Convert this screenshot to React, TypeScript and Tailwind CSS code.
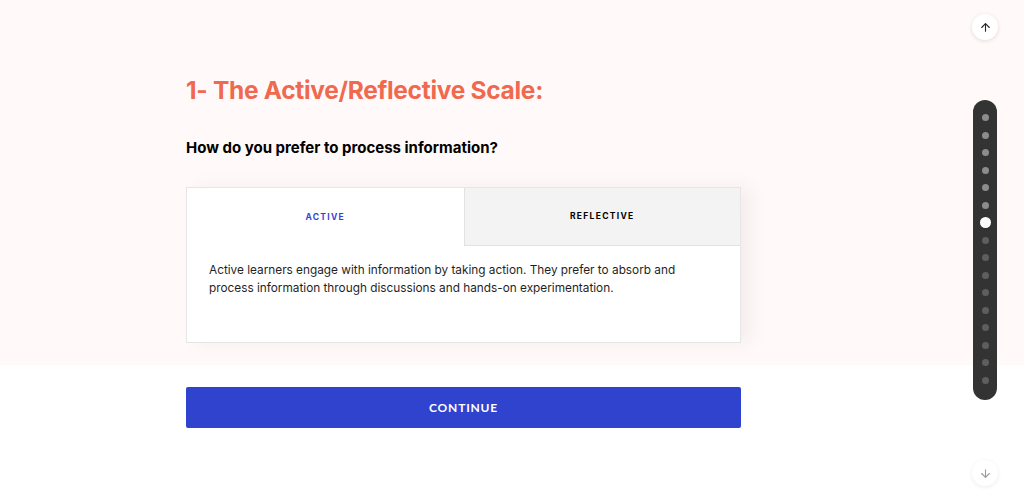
import React, { useState } from 'react';

const tabs = [
  {
    id: 'active',
    label: 'ACTIVE',
    text: 'Active learners engage with information by taking action. They prefer to absorb and process information through discussions and hands-on experimentation.',
  },
  {
    id: 'reflective',
    label: 'REFLECTIVE',
    text: 'Reflective learners prefer to think things through quietly first. They like to process information by reflecting on it and working alone.',
  },
];

const dots = Array.from({ length: 16 }, (_, i) => i);

const ArrowIcon = ({ down = false, className = '' }: { down?: boolean; className?: string }) => (
  <svg viewBox="0 0 24 24" className={className} fill="none" stroke="currentColor" strokeWidth={2} strokeLinecap="round" strokeLinejoin="round">
    {down ? (
      <>
        <path d="M12 5v14" />
        <path d="M19 12l-7 7-7-7" />
      </>
    ) : (
      <>
        <path d="M12 19V5" />
        <path d="M5 12l7-7 7 7" />
      </>
    )}
  </svg>
);

const App: React.FC = () => {
  const [tab, setTab] = useState('active');
  const current = tabs.find((t) => t.id === tab)!;

  return (
    <div className="relative w-full h-[504px] overflow-hidden bg-white" style={{ fontFamily: 'Inter, "Noto Sans", sans-serif' }}>
      <section className="bg-[#fffaf9] pt-[73px] pb-[22px] pl-[186px]">
        <h1 className="text-[24.5px] leading-[34px] font-bold text-[#f0694f] tracking-[-0.3px]">1- The Active/Reflective Scale:</h1>
        <h2 className="mt-[30px] text-[15px] leading-[22px] font-bold text-black">How do you prefer to process information?</h2>

        <div className="mt-[28px] w-[555px] h-[156px] bg-white border border-[#e6e6e6] shadow-[10px_0_18px_rgba(0,0,0,0.05)] flex flex-col">
          <div className="grid grid-cols-2 h-[58px]">
            {tabs.map((t) => (
              <button
                key={t.id}
                onClick={() => setTab(t.id)}
                className={`text-[8.5px] font-bold tracking-[1.3px] ${
                  tab === t.id ? 'bg-white text-[#3a3fd2]' : 'bg-[#f3f3f3] text-black border-b border-l border-[#e2e2e2]'
                }`}
              >
                {t.label}
              </button>
            ))}
          </div>
          <p className="px-[22px] pt-[15px] text-[11.8px] leading-[18px] text-[#1f1f1f]">{current.text}</p>
        </div>
      </section>

      <div className="pt-[22px] pl-[186px]">
        <button
          className="w-[555px] h-[41px] bg-[#2f43cf] text-white text-[12px] font-bold tracking-[0.8px] rounded-[2px]"
          style={{ fontFamily: 'Lato, "Liberation Sans", sans-serif' }}
        >
          CONTINUE
        </button>
      </div>

      <div className="absolute right-[26px] top-[14px] w-[26px] h-[26px] rounded-full bg-white shadow-[0_1px_4px_rgba(0,0,0,0.12)] flex items-center justify-center">
        <ArrowIcon className="w-[13px] h-[13px] text-[#222]" />
      </div>

      <div className="absolute right-[27px] top-[100px] w-[24px] h-[300px] rounded-full bg-[#333333] flex flex-col items-center pt-[14px] gap-[10.5px]">
        {dots.map((i) =>
          i === 6 ? (
            <span key={i} className="w-[11px] h-[11px] -my-[2px] rounded-full bg-white" />
          ) : (
            <span key={i} className={`w-[7px] h-[7px] rounded-full ${i < 6 ? 'bg-[#8c8c8c]' : 'bg-[#5e5e5e]'}`} />
          )
        )}
      </div>

      <div className="absolute right-[26px] top-[460px] w-[26px] h-[26px] rounded-full bg-white shadow-[0_1px_4px_rgba(0,0,0,0.08)] flex items-center justify-center">
        <ArrowIcon down className="w-[13px] h-[13px] text-[#999]" />
      </div>
    </div>
  );
};

export default App;
